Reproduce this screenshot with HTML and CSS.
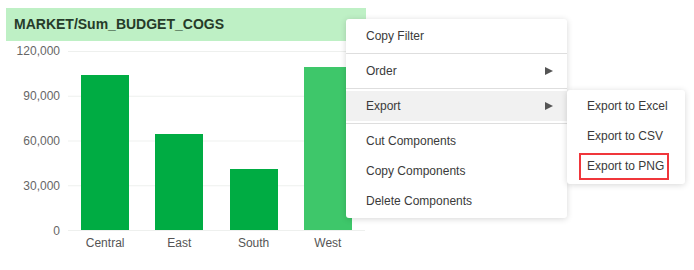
FILE: index.html
```html
<!DOCTYPE html>
<html lang="en">

<head>
  <meta charset="UTF-8" />
  <title>Market Budget COGS</title>
  <link rel="stylesheet" href="styles.css">
</head>

<body>
  <div class="stage">
    <div class="widget">
      <div class="widget-title">MARKET/Sum_BUDGET_COGS</div>

      <div class="chart">
        <div class="y-axis">
          <span>120,000</span>
          <span>90,000</span>
          <span>60,000</span>
          <span>30,000</span>
          <span>0</span>
        </div>
        <div class="plot">
          <div class="slot"><div class="bar" style="height: 86.6%"></div></div>
          <div class="slot"><div class="bar" style="height: 53.6%"></div></div>
          <div class="slot"><div class="bar" style="height: 34.1%"></div></div>
          <div class="slot"><div class="bar bar-hover" style="height: 91.1%"></div></div>
        </div>
        <div></div>
        <div class="x-axis">
          <span>Central</span>
          <span>East</span>
          <span>South</span>
          <span>West</span>
        </div>
      </div>
    </div>

    <!-- context menu -->
    <div class="menu">
      <div class="menu-group">
        <div class="menu-item">Copy Filter</div>
      </div>
      <div class="menu-group">
        <div class="menu-item">Order <span class="arrow"></span></div>
      </div>
      <div class="menu-group">
        <div class="menu-item active">Export <span class="arrow"></span>
          <div class="submenu">
            <div class="menu-item">Export to Excel</div>
            <div class="menu-item">Export to CSV</div>
            <div class="menu-item"><span class="marked">Export to PNG</span></div>
          </div>
        </div>
      </div>
      <div class="menu-group">
        <div class="menu-item">Cut Components</div>
        <div class="menu-item">Copy Components</div>
        <div class="menu-item">Delete Components</div>
      </div>
    </div>
  </div>
</body>
</html>
```

FILE: styles.css
```css
body {
  margin: 0;
  padding: 0;
  background-color: #fff;
  font-family: 'Liberation Sans', Arial, sans-serif;
  color: #333;
}

.stage {
  position: relative;
  width: 694px;
  height: 270px;
  overflow: hidden;
}

.widget {
  width: 360px;
  margin: 8px 0 0 6px;
}

.widget-title {
  height: 33px;
  line-height: 33px;
  padding-left: 8px;
  background-color: #bef0c5;
  color: #263b29;
  font-size: 14px;
  font-weight: bold;
}

.chart {
  display: grid;
  grid-template-columns: 62px 297px;
  grid-template-rows: 180px auto;
  margin-top: 10px;
}

.y-axis {
  display: flex;
  flex-direction: column;
  justify-content: space-between;
  align-items: flex-end;
  margin: -7px 0 -7px 0;
  padding-right: 8px;
  font-size: 12px;
  line-height: 14px;
  color: #666;
}

.plot {
  display: flex;
  align-items: flex-end;
  height: 179px;
  border-bottom: 1px solid #eef0ee;
  background-image: linear-gradient(#eef0ee 1px, transparent 1px);
  background-size: 100% 44.75px;
}

.slot {
  flex: 1;
  height: 100%;
  display: flex;
  align-items: flex-end;
  justify-content: center;
}

.bar {
  width: 48px;
  background-color: #00ac43;
}

.bar-hover {
  background-color: #3ec76a;
}

.x-axis {
  display: flex;
  margin-top: 5px;
  font-size: 12px;
  line-height: 14px;
  color: #555;
}

.x-axis span {
  flex: 1;
  text-align: center;
}

/* context menu */
.menu {
  position: absolute;
  left: 346px;
  top: 19px;
  width: 221px;
  background-color: #fff;
  border-radius: 3px;
  box-shadow: 0 1px 6px rgba(0, 0, 0, 0.16);
  font-size: 12px;
  color: #3a3a3a;
}

.menu-group {
  padding: 2px 0;
}

.menu-group + .menu-group {
  border-top: 1px solid #dedede;
}

.menu-item {
  position: relative;
  display: flex;
  align-items: center;
  justify-content: space-between;
  height: 30px;
  padding: 0 14px 0 20px;
}

.menu-item.active {
  background-color: #f1f1f1;
}

.arrow {
  width: 0;
  height: 0;
  border-left: 8px solid #555;
  border-top: 4px solid transparent;
  border-bottom: 4px solid transparent;
}

.submenu {
  position: absolute;
  left: 100%;
  top: -1px;
  width: 118px;
  padding: 1px 0 3px;
  background-color: #fff;
  border-radius: 3px;
  box-shadow: 0 1px 6px rgba(0, 0, 0, 0.16);
}

.submenu .menu-item {
  padding: 0 0 0 20px;
}

.marked {
  display: inline-block;
  margin-left: -8px;
  padding: 0 3px 0 6px;
  line-height: 23px;
  border: 2px solid #f0363b;
}
```
